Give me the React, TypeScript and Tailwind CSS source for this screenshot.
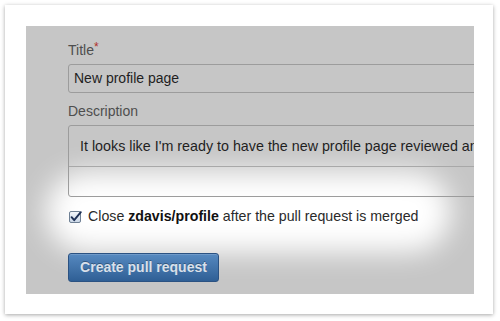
export default function App() {
  return (
    <div className="w-[500px] h-[321px] bg-white pt-[5px] pl-[5px] font-['Liberation_Sans',Arial,sans-serif]">
      {/* tarjeta blanca con sombra */}
      <div className="w-[488px] h-[309px] bg-white shadow-[0_1px_4px_rgba(0,0,0,0.35)] pt-[21px] pl-[21px]">
        {/* panel gris con el foco de luz */}
        <div className="relative w-[448px] h-[268px] bg-[#c6c6c6] overflow-hidden pl-[42px] pt-[14px]">
          <div className="absolute left-[20px] top-[146px] w-[405px] h-[80px] rounded-full bg-white blur-[14px]" />
          <div className="relative flex flex-col">
            <label className="text-[14px] leading-[20px] text-[#4e4e4e]">
              Title<span className="text-[#b0302a] text-[12px] align-top leading-[14px]">*</span>
            </label>
            <div className="mt-[4px] w-[420px] h-[29px] border border-[#9c9c9c] rounded-[3px] px-[5px] flex items-center text-[14px] text-[#1f1f1f]">
              New profile page
            </div>
            <label className="mt-[8px] text-[14px] leading-[20px] text-[#4e4e4e]">Description</label>
            <div className="mt-[4px] w-[420px] h-[72px] border border-[#9c9c9c] rounded-[3px] flex flex-col">
              <div className="h-[40px] pl-[11px] pt-[10px] text-[14.3px] leading-[20px] text-[#1f1f1f] whitespace-nowrap overflow-hidden">
                It looks like I'm ready to have the new profile page reviewed and merged
              </div>
              <div className="flex-1 border-t border-[#a8a8a8]" />
            </div>
            <div className="mt-[10px] flex items-center h-[20px] text-[14.2px] text-[#2a2a2a]">
              <svg width="13" height="13" viewBox="0 0 13 13" className="ml-[1px] mr-[6px]">
                <defs>
                  <linearGradient id="cb" x1="0" y1="0" x2="0" y2="1">
                    <stop offset="0" stopColor="#f4f7fb" />
                    <stop offset="1" stopColor="#c9d6e6" />
                  </linearGradient>
                </defs>
                <rect x="0.5" y="0.5" width="11" height="11" rx="1.5" fill="url(#cb)" stroke="#6f8094" />
                <path d="M2.6 6.2 L5.2 9.2 L11.8 1.2" fill="none" stroke="#1d2f55" strokeWidth="1.9" strokeLinecap="round" strokeLinejoin="round" />
              </svg>
              <span>
                Close <b className="text-[#111]">zdavis/profile</b> after the pull request is merged
              </span>
            </div>
            <button className="mt-[26px] w-[151px] h-[29px] rounded-[3px] border border-[#2b5282] bg-[linear-gradient(#5689c0,#2f5f95)] text-[14px] font-bold text-[#d9e0ea] [text-shadow:0_-1px_0_rgba(0,0,0,0.3)] shadow-[inset_0_1px_0_rgba(255,255,255,0.15)]">
              Create pull request
            </button>
          </div>
        </div>
      </div>
    </div>
  );
}
